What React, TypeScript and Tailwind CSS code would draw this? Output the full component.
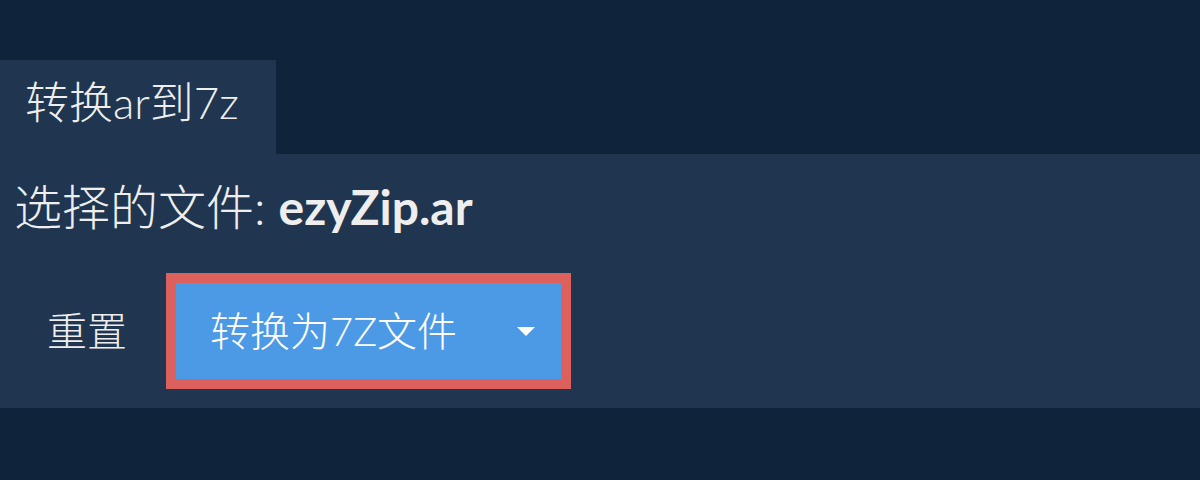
import React from "react";

const font = { fontFamily: '"Lato", "Noto Sans CJK SC", sans-serif' };

export default function App() {
  return (
    <div className="w-[1200px] h-[480px] bg-[#0f243a] pt-[60px] text-[#eeeeee]" style={font}>
      {/* Tab */}
      <div className="w-[276px] h-[94px] bg-[#203650] flex items-center pl-[25px] pb-[10px]">
        <span className="text-[44px] font-light leading-none">转换ar到7z</span>
      </div>

      {/* Panel */}
      <div className="h-[254px] bg-[#203650] flex flex-col">
        <div className="pl-[14px] pt-[29px] h-[119px] text-[48px] leading-none font-light">
          选择的文件: <span className="font-bold">ezyZip.ar</span>
        </div>

        <div className="flex items-center">
          <button className="ml-[47px] text-[40px] font-light leading-none text-[#eeeeee]">重置</button>
          <div className="ml-[39px] border-[10px] border-[#dc605b]">
            <button className="w-[385px] h-[96px] bg-[#4c9ae6] flex items-center justify-between pl-[34px] pr-[26px] text-white">
              <span className="text-[40px] font-light leading-none">转换为7Z文件</span>
              <svg width="18" height="9" viewBox="0 0 18 9">
                <path d="M0 0 H18 L9 9 Z" fill="#ffffff" />
              </svg>
            </button>
          </div>
        </div>
      </div>
    </div>
  );
}
